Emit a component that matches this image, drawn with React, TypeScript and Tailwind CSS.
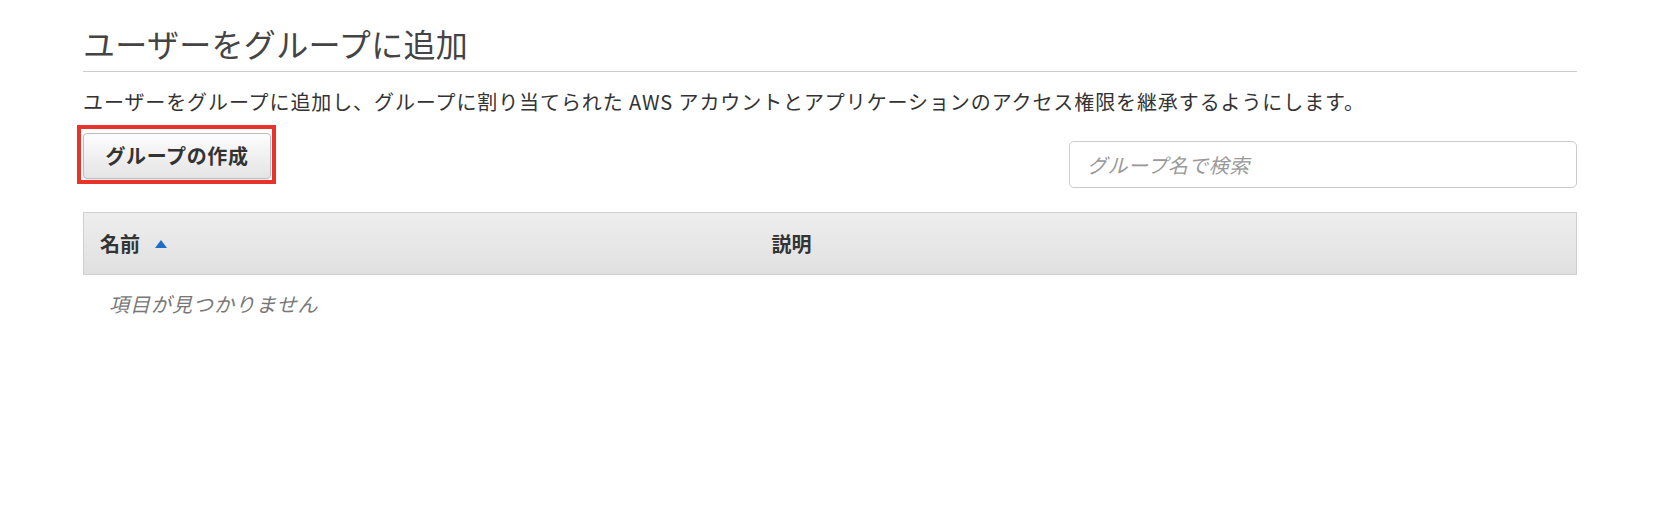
const font = { fontFamily: '"Noto Sans CJK JP", "Noto Sans", sans-serif' };

function SortUpIcon() {
  return (
    <svg width="12" height="8" viewBox="0 0 12 8" className="ml-[15px] mt-[1px]">
      <polygon points="6,0 12,8 0,8" fill="#1f6dc6" />
    </svg>
  );
}

export default function App() {
  return (
    <div className="w-[1660px] h-[526px] bg-white px-[83px]" style={font}>
      <h1 className="pt-[27px] pb-[12px] text-[32px] leading-[32px] tracking-[0.3px] text-[#444] border-b border-[#cccccc]">
        ユーザーをグループに追加
      </h1>

      <p className="mt-[20px] text-[20px] leading-[20px] tracking-[0.9px] text-[#333]">
        ユーザーをグループに追加し、グループに割り当てられた AWS アカウントとアプリケーションのアクセス権限を継承するようにします。
      </p>

      <div className="mt-[13px] flex items-start justify-between">
        {/* annotation box round the button */}
        <div className="-ml-[6px] border-4 border-[#e8332a] pl-[2px] pt-[4px] pr-[1px] pb-[1px]">
          <button className="h-[46px] w-[188px] rounded-[4px] border border-[#bdbdbd] bg-gradient-to-b from-[#fdfdfd] to-[#e4e4e4] text-[20px] font-bold tracking-[0.6px] text-[#333] shadow-[0_1px_1px_rgba(0,0,0,0.08)]">
            グループの作成
          </button>
        </div>
        <input
          type="text"
          placeholder="グループ名で検索"
          className="mt-[16px] h-[47px] w-[508px] rounded-[5px] border border-[#cccccc] px-[17px] text-[20px] italic tracking-[0.5px] text-[#333] outline-none placeholder:text-[#999] placeholder:italic"
        />
      </div>

      <div className="mt-[24px]">
        <div className="flex h-[63px] items-center border border-[#d0d0d0] bg-gradient-to-b from-[#eeeeee] to-[#e0e0e0] text-[20px] font-bold text-[#333]">
          <div className="flex w-[45%] items-center pl-[16px]">
            名前
            <SortUpIcon />
          </div>
          <div className="pl-[16px]">説明</div>
        </div>
        <div className="pt-[19px] pl-[26px] text-[20px] leading-[20px] italic tracking-[1px] text-[#777]">
          項目が見つかりません
        </div>
      </div>
    </div>
  );
}
